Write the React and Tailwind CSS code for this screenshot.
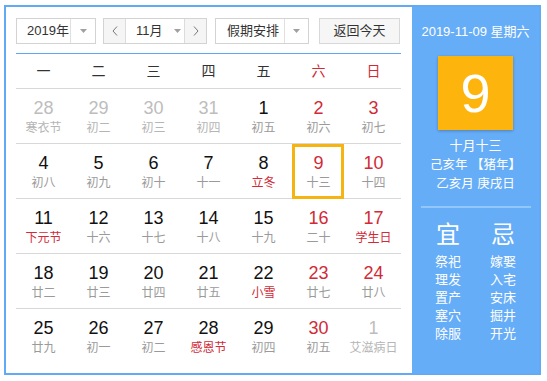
import React from 'react'

const RED = 'text-[#d22a37]'

const weeks = [
  [
    { d: 28, l: '寒衣节', o: true },
    { d: 29, l: '初二', o: true },
    { d: 30, l: '初三', o: true },
    { d: 31, l: '初四', o: true },
    { d: 1, l: '初五' },
    { d: 2, l: '初六', we: true },
    { d: 3, l: '初七', we: true },
  ],
  [
    { d: 4, l: '初八' },
    { d: 5, l: '初九' },
    { d: 6, l: '初十' },
    { d: 7, l: '十一' },
    { d: 8, l: '立冬', h: true },
    { d: 9, l: '十三', we: true, sel: true },
    { d: 10, l: '十四', we: true },
  ],
  [
    { d: 11, l: '下元节', h: true },
    { d: 12, l: '十六' },
    { d: 13, l: '十七' },
    { d: 14, l: '十八' },
    { d: 15, l: '十九' },
    { d: 16, l: '二十', we: true },
    { d: 17, l: '学生日', we: true, h: true },
  ],
  [
    { d: 18, l: '廿二' },
    { d: 19, l: '廿三' },
    { d: 20, l: '廿四' },
    { d: 21, l: '廿五' },
    { d: 22, l: '小雪', h: true },
    { d: 23, l: '廿七', we: true },
    { d: 24, l: '廿八', we: true },
  ],
  [
    { d: 25, l: '廿九' },
    { d: 26, l: '初一' },
    { d: 27, l: '初二' },
    { d: 28, l: '感恩节', h: true },
    { d: 29, l: '初四' },
    { d: 30, l: '初五', we: true },
    { d: 1, l: '艾滋病日', o: true },
  ],
]

const Caret = () => (
  <svg width="7" height="4" viewBox="0 0 7 4"><path d="M0 0h7L3.5 4z" fill="#a0a0a0" /></svg>
)

const Chevron = ({ dir }) => (
  <svg width="6" height="10" viewBox="0 0 6 10">
    <path d={dir === 'l' ? 'M5 0.5 1 5l4 4.5' : 'M1 0.5 5 5 1 9.5'} fill="none" stroke="#777" strokeWidth="1" />
  </svg>
)

const Cell = ({ c }) => {
  let num = 'text-[#111]'
  if (c.we) num = RED
  if (c.o) num = 'text-[#bdbdbd]'
  let lun = 'text-[#9a9a9a]'
  if (c.h) lun = RED
  if (c.o) lun = 'text-[#b5b5b5]'
  return (
    <div className="relative flex flex-col items-center pt-[9px]">
      {c.sel && <div className="absolute top-0 bottom-[-1px] left-[1px] right-[2px] border-[3px] border-[#f6b412]" />}
      <span className={`text-[18px] leading-[20px] ${num}`}>{c.d}</span>
      <span className={`mt-[2px] text-[12px] leading-[16px] whitespace-nowrap ${lun}`}>{c.l}</span>
    </div>
  )
}

export default function App() {
  return (
    <div
      className="w-[547px] h-[381px] bg-white pl-[4px] pt-[5px]"
      style={{ fontFamily: '"Liberation Sans", "Noto Sans CJK SC", sans-serif' }}
    >
      <div className="flex w-[537px] h-[370px] border-2 border-[#62aaf6]">
        {/* left: calendar */}
        <div className="w-[406px] pl-[10px] pr-[11px] pt-[11px] bg-white">
          <div className="flex h-[26px] text-[13px] text-[#333]">
            <div className="flex w-[80px] border border-[#d3d3d3]">
              <div className="flex-1 flex items-center pl-[10px]">2019年</div>
              <div className="w-[25px] flex items-center justify-center border-l border-[#e0e0e0]"><Caret /></div>
            </div>
            <div className="flex ml-[7px] w-[104px] border border-[#d3d3d3]">
              <div className="w-[22px] flex items-center justify-center bg-[#f5f5f5] border-r border-[#dcdcdc]"><Chevron dir="l" /></div>
              <div className="flex-1 flex items-center pl-[10px] gap-[11px]">11月<Caret /></div>
              <div className="w-[22px] flex items-center justify-center bg-[#f5f5f5] border-l border-[#dcdcdc]"><Chevron dir="r" /></div>
            </div>
            <div className="flex ml-[8px] w-[94px] border border-[#d3d3d3]">
              <div className="flex-1 flex items-center pl-[11px]">假期安排</div>
              <div className="w-[24px] flex items-center justify-center border-l border-[#e0e0e0]"><Caret /></div>
            </div>
            <div className="ml-[10px] w-[81px] flex items-center justify-center border border-[#d8d8d8] bg-[#f6f6f6]">返回今天</div>
          </div>
          <div className="mt-[9px] border-t border-[#5ea6f0]" />
          <div className="grid grid-cols-7 h-[35px] border-b border-[#d8d8d8] text-[14px] text-[#333]">
            {['一', '二', '三', '四', '五', '六', '日'].map((w, i) => (
              <div key={w} className={`flex items-center justify-center ${i > 4 ? RED : ''}`}>{w}</div>
            ))}
          </div>
          {weeks.map((row, r) => (
            <div key={r} className={`grid grid-cols-7 h-[55px] ${r < 4 ? 'border-b border-[#d8d8d8]' : ''}`}>
              {row.map((c, i) => <Cell key={i} c={c} />)}
            </div>
          ))}
        </div>
        {/* right: today panel */}
        <div className="flex-1 bg-[#66adf8] text-white flex flex-col items-center pt-[17px]">
          <div className="text-[13px] leading-[16px] whitespace-nowrap">2019-11-09 星期六</div>
          <div className="mt-[16px] w-[75px] h-[74px] bg-[#fdb40d] flex items-center justify-center shadow-[0_1px_3px_rgba(0,0,0,0.25)]">
            <span className="text-[54px] leading-none">9</span>
          </div>
          <div className="mt-[6px] text-[12.5px] leading-[19.5px] text-center whitespace-nowrap">
            <div className="text-[13px]">十月十三</div>
            <div>己亥年 【猪年】</div>
            <div>乙亥月 庚戌日</div>
          </div>
          <div className="mt-[11px] w-[110px] h-[2px] bg-[#93c7fb]" />
          <div className="mt-[13px] flex gap-[7px]">
            {[
              ['宜', ['祭祀', '理发', '置产', '塞穴', '除服']],
              ['忌', ['嫁娶', '入宅', '安床', '掘井', '开光']],
            ].map(([t, items]) => (
              <div key={t} className="w-[48px] flex flex-col items-center">
                <div className="text-[24px] leading-[28px]">{t}</div>
                <div className="mt-[4px] text-[13px] leading-[18px] text-center">
                  {items.map((x) => <div key={x}>{x}</div>)}
                </div>
              </div>
            ))}
          </div>
        </div>
      </div>
    </div>
  )
}
